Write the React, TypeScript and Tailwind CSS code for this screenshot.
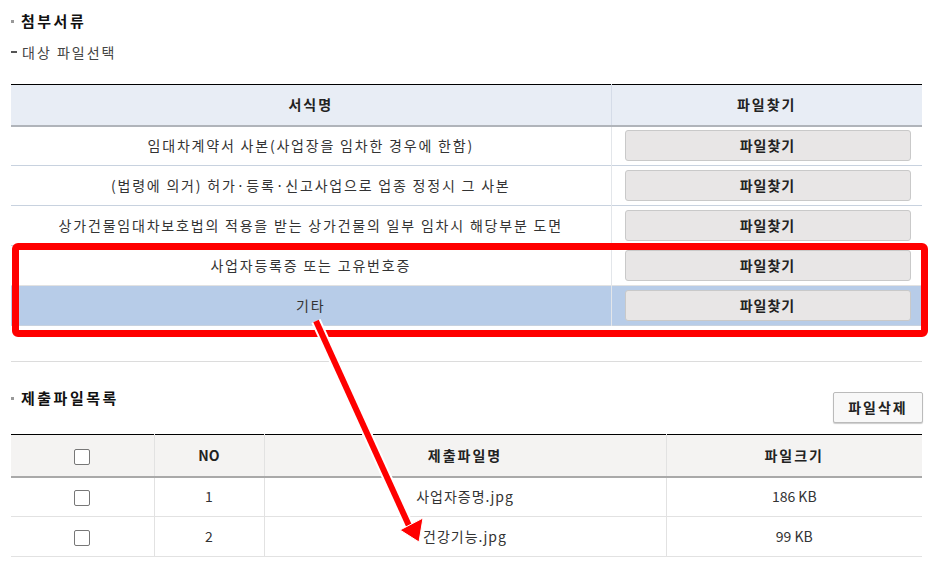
import React from "react";

const FONT = { fontFamily: '"Noto Sans CJK KR", "Noto Sans", sans-serif' };

const FORMS = [
  "임대차계약서 사본(사업장을 임차한 경우에 한함)",
  "(법령에 의거) 허가·등록·신고사업으로 업종 정정시 그 사본",
  "상가건물임대차보호법의 적용을 받는 상가건물의 일부 임차시 해당부분 도면",
  "사업자등록증 또는 고유번호증",
  "기타",
];

const FILES = [
  { no: 1, name: "사업자증명.jpg", size: "186 KB" },
  { no: 2, name: "건강기능.jpg", size: "99 KB" },
];

function SectionTitle({ children }: { children: React.ReactNode }) {
  return (
    <div className="flex items-center gap-[7px] h-[12px]">
      <span className="w-[3px] h-[3px] bg-[#999]" />
      <span className="text-[15px] font-bold tracking-[2.5px] text-[#111]">{children}</span>
    </div>
  );
}

function Box() {
  return <span className="inline-block w-[16px] h-[16px] border border-[#777] rounded-[2px] bg-white align-middle" />;
}

export default function App() {
  return (
    <div className="relative w-[942px] h-[581px] bg-white overflow-hidden text-[#333]" style={FONT}>
      <div className="pl-[11px] pr-[20px] pt-[15px]">
        <SectionTitle>첨부서류</SectionTitle>
        <div className="flex items-center gap-[5px] mt-[19px] h-[12px] text-[14px] tracking-[2px] text-[#444]">
          <span className="w-[6px] h-[2px] bg-[#555]" />
          대상 파일선택
        </div>

        <table className="mt-[26px] w-[911px] table-fixed border-collapse border-t border-black text-[14px]">
          <thead>
            <tr className="h-[41px] bg-[#e8edf5] border-b-2 border-[#b0b4ba]">
              <th className="w-[600px] font-bold tracking-[2px] text-[#222] border-r border-[#d5dce8]">서식명</th>
              <th className="font-bold tracking-[2px] text-[#222]">파일찾기</th>
            </tr>
          </thead>
          <tbody>
            {FORMS.map((f, i) => (
              <tr
                key={f}
                className={`h-[40px] ${i === 4 ? "bg-[#b7cce8]" : "bg-white"} ${
                  i === 3 ? "border-b border-[#e2e2e2]" : "border-b border-[#c8d2df]"
                }`}
              >
                <td className="text-center tracking-[1.8px] text-[#333] border-r border-[#e3e6ea]">{f}</td>
                <td className="px-[13px]">
                  <button className="w-[286px] h-[31px] rounded-[3px] border border-[#c9c9c9] bg-[#e8e6e6] font-bold tracking-[1px] text-[#222]">
                    파일찾기
                  </button>
                </td>
              </tr>
            ))}
          </tbody>
        </table>

        <div className="mt-[35px] w-[911px] h-px bg-[#dcdcdc]" />

        <div className="mt-[30px] flex items-start justify-between w-[912px]">
          <SectionTitle>제출파일목록</SectionTitle>
          <button className="w-[90px] h-[31px] border border-[#bbb] bg-[#f8f8f8] shadow-[0_1px_1px_rgba(0,0,0,0.2)] text-[14px] font-bold tracking-[2px] text-[#222] rounded-[2px]">
            파일삭제
          </button>
        </div>

        <table className="mt-[11px] w-[911px] table-fixed border-collapse border-t border-black text-[14px]">
          <thead>
            <tr className="h-[42px] bg-[#f4f3f2] border-b-2 border-[#a9a9a9]">
              <th className="w-[143px] border-r border-[#e2e2e2]"><Box /></th>
              <th className="w-[110px] font-bold text-[#222] border-r border-[#e2e2e2]">NO</th>
              <th className="w-[402px] font-bold tracking-[2px] text-[#222] border-r border-[#e2e2e2]">제출파일명</th>
              <th className="font-bold tracking-[2px] text-[#222]">파일크기</th>
            </tr>
          </thead>
          <tbody>
            {FILES.map((r) => (
              <tr key={r.no} className="h-[40px] border-b border-[#e2e2e2]">
                <td className="text-center border-r border-[#e2e2e2]"><Box /></td>
                <td className="text-center border-r border-[#e2e2e2]">{r.no}</td>
                <td className="text-center tracking-[1px] border-r border-[#e2e2e2]">{r.name}</td>
                <td className="text-center">{r.size}</td>
              </tr>
            ))}
          </tbody>
        </table>
      </div>

      {/* annotation: red highlight box */}
      <div className="absolute left-[12px] top-[243px] w-[916px] h-[94px] border-[7px] border-[#ff0000] rounded-[6px]" />

      {/* annotation: arrow */}
      <svg className="absolute left-0 top-0" width="942" height="581" viewBox="0 0 942 581">
        <line x1="316" y1="321" x2="410" y2="528" stroke="#fff" strokeWidth="10" />
        <line x1="316" y1="321" x2="410" y2="528" stroke="#ff0000" strokeWidth="6" />
        <polygon points="400,530 423,518 419,542" fill="#ff0000" stroke="#fff" strokeWidth="1" />
      </svg>
    </div>
  );
}
